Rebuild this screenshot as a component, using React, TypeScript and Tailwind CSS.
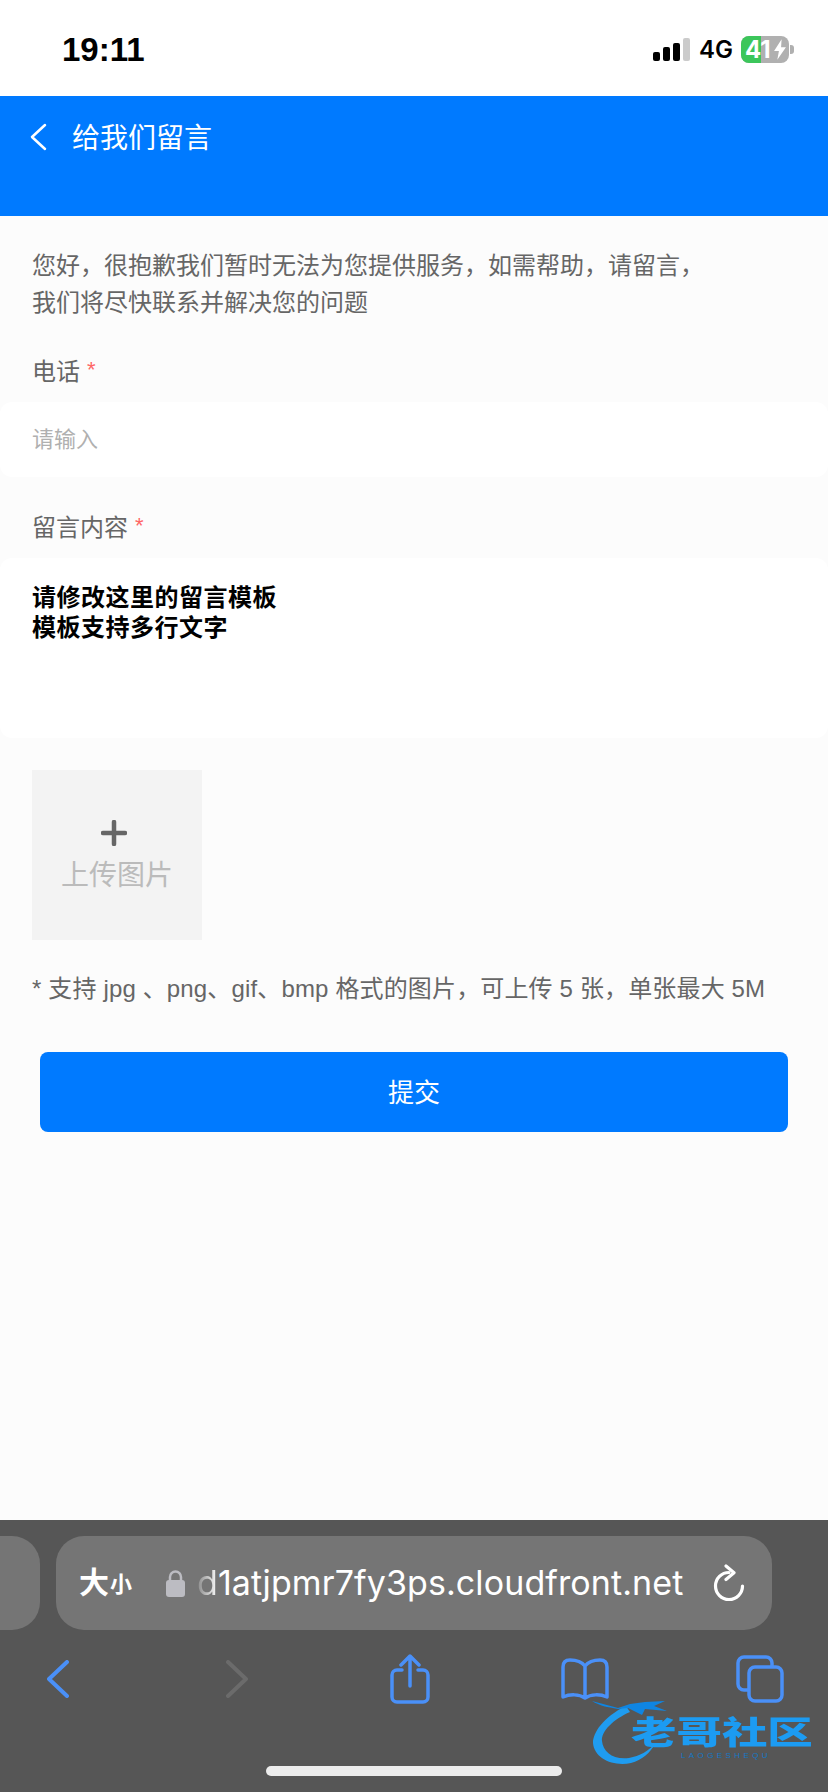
const cjk = "font-['Liberation_Sans','Noto_Sans_CJK_SC',sans-serif]";

function StatusBar() {
  return (
    <div className="flex h-24 shrink-0 items-start justify-between bg-white pl-[62px] pr-[34px] pt-[30px]">
      <span className="font-['Liberation_Sans',sans-serif] text-[33px] font-bold leading-[40px] text-black">19:11</span>
      <div className="mt-[6px] flex items-center">
        <div className="flex h-[23px] items-end gap-[3px]">
          <span className="h-[9px] w-[7px] rounded-[2px] bg-black" />
          <span className="h-[14px] w-[7px] rounded-[2px] bg-black" />
          <span className="h-[18px] w-[7px] rounded-[2px] bg-black" />
          <span className="h-[23px] w-[7px] rounded-[2px] bg-[#cbcbcb]" />
        </div>
        <span className="ml-[9px] font-['Inter',sans-serif] text-[24px] font-semibold leading-[24px] text-black">4G</span>
        <div className="relative ml-[8px] flex h-[27px] w-[48px] overflow-hidden rounded-[8px] bg-[#b0b0b0]">
          <span className="h-full w-[20px] bg-[#3cc65b]" />
          <span className="absolute left-[4px] top-0 font-['Inter',sans-serif] text-[24px] font-bold leading-[27px] text-white">41</span>
          <svg className="absolute left-[32px] top-[3px]" width="14" height="21" viewBox="0 0 13 19">
            <path d="M8 0 1 11h4.500L4 19l8-11.500H7.500z" fill="#fff" />
          </svg>
        </div>
        <span className="ml-[1px] h-[9px] w-[4px] rounded-r-[3px] bg-[#b0b0b0]" />
      </div>
    </div>
  );
}

function Required({ children }: { children: string }) {
  return (
    <div className="flex pl-8 text-[24px] leading-[36px] text-[#666]">
      {children}
      <span className="ml-[7px] font-['Liberation_Sans',sans-serif] text-[22px] leading-[32px] text-[#f66]">*</span>
    </div>
  );
}

function Toolbar() {
  const blue = "#4a90f8";
  return (
    <div className="relative flex h-[272px] shrink-0 flex-col bg-[#565656]">
      <div className="mt-4 flex h-[94px] items-center">
        <div className="h-full w-[40px] rounded-r-[28px] bg-[#757575]" />
        <div className="ml-4 flex h-full w-[716px] items-center rounded-[28px] bg-[#757575] pl-[23px]">
          <span className="text-[30px] font-bold leading-none text-white">大</span>
          <span className="ml-[1px] mt-[4px] text-[22px] font-bold leading-none text-white">小</span>
          <svg className="ml-[34px]" width="19" height="27" viewBox="0 0 19 27">
            <path d="M4 11V7a5.500 5.500 0 0 1 11 0v4" fill="none" stroke="#bcbcc2" strokeWidth="2.500" />
            <rect x="0" y="10" width="19" height="17" rx="3" fill="#bcbcc2" />
          </svg>
          <span className="ml-[12px] font-['Inter',sans-serif] text-[34px] leading-none tracking-[0.1px] text-white">
            <span className="bg-gradient-to-r from-[#8a8a8a] to-white bg-clip-text text-transparent">d</span>1atjpmr7fy3ps.cloudfront.net
          </span>
          <svg className="ml-auto mr-[27px]" width="32" height="38" viewBox="0 0 32 38" fill="none" stroke="#fff" strokeWidth="3.200" strokeLinecap="round" strokeLinejoin="round">
            <path d="M16 8.500A13.500 13.500 0 1 0 29.500 22" />
            <path d="M13 2l8 6.800-8 6.700" />
          </svg>
        </div>
      </div>
      <div className="mt-6 flex h-[50px] items-center pl-[47px]">
        <svg width="22" height="38" viewBox="0 0 22 38" fill="none" stroke={blue} strokeWidth="4" strokeLinecap="round" strokeLinejoin="round">
          <path d="M20 2 2 19l18 17" />
        </svg>
        <svg className="ml-[157px]" width="22" height="38" viewBox="0 0 22 38" fill="none" stroke="#6b6b6b" strokeWidth="4" strokeLinecap="round" strokeLinejoin="round">
          <path d="m2 2 18 17L2 36" />
        </svg>
        <svg className="ml-[142px]" width="40" height="50" viewBox="0 0 40 50" fill="none" stroke={blue} strokeWidth="3.500" strokeLinecap="round" strokeLinejoin="round">
          <path d="M12 16H7a5 5 0 0 0-5 5v22a5 5 0 0 0 5 5h26a5 5 0 0 0 5-5V21a5 5 0 0 0-5-5h-5" />
          <path d="M20 32V3M11 11l9-9 9 9" />
        </svg>
        <svg className="ml-[130px]" width="50" height="42" viewBox="0 0 50 42" fill="none" stroke={blue} strokeWidth="3.500" strokeLinecap="round" strokeLinejoin="round">
          <path d="M25 8C21 3 15 2 10 2 5 2 3 5 3 9v30c7-3 16-3 22 1 6-4 15-4 22-1V9c0-4-2-7-7-7-5 0-11 1-15 6zM25 8v32" />
        </svg>
        <svg className="ml-[126px]" width="48" height="48" viewBox="0 0 48 48" fill="none" stroke={blue} strokeWidth="3.500">
          <path d="M12 35H8a6 6 0 0 1-6-6V8a6 6 0 0 1 6-6h22a6 6 0 0 1 6 6v4" />
          <rect x="13" y="12" width="33" height="34" rx="6" />
        </svg>
      </div>
      <div className="absolute bottom-4 left-[266px] h-[10px] w-[296px] rounded-full bg-[#ececec]" />
      <div className="absolute left-[590px] top-[176px] h-[72px] w-[226px]">
        <svg className="absolute left-0 top-0" width="100" height="72" viewBox="0 0 100 72" fill="none">
          <path d="M36 10C13 21 3 37 3 47c1 15 20 24 38 20 11-3 19-10 24-19-7 7-15 12-26 14C23 64 13 56 12 45c-1-10 12-22 28-29z" fill="#1f9cf0" />
          <path d="M28 12 2 5c8 5 15 6 26 8l10-1 14 7 3-6 22 2-13-5 11-5-20 1L40 8z" fill="#0f85e2" />
        </svg>
        <span className="absolute left-[41px] top-[15px] origin-left scale-x-[1.42] whitespace-nowrap font-['Noto_Sans_CJK_SC',sans-serif] text-[32px] font-black leading-[38px] text-[#1c9bf2] blur-[0.4px]">老哥社区</span>
        <span className="absolute left-[91px] top-[55px] whitespace-nowrap font-['Liberation_Sans',sans-serif] text-[8px] leading-[10px] tracking-[3.400px] text-[#1576c4]">LAOGESHEQU</span>
      </div>
    </div>
  );
}

export default function App() {
  return (
    <div className={`flex h-[1792px] w-[828px] flex-col overflow-hidden bg-[#fcfcfc] ${cjk}`}>
      <StatusBar />
      <header className="flex h-[120px] shrink-0 items-start bg-[#007aff] pl-[28px] pt-[26px]">
        <svg className="mt-[1px]" width="20" height="28" viewBox="0 0 20 28" fill="none" stroke="#fff" strokeWidth="2.500" strokeLinecap="round" strokeLinejoin="round">
          <path d="M17 2 4 14l13 12" />
        </svg>
        <h1 className="ml-[24px] mt-[3px] text-[28px] font-normal leading-[28px] text-white">给我们留言</h1>
      </header>
      <main className="flex-1">
        <p className="mt-[31px] pl-8 text-[24px] leading-[37px] text-[#666]">
          您好，很抱歉我们暂时无法为您提供服务，如需帮助，请留言，
          <br />
          我们将尽快联系并解决您的问题
        </p>
        <div className="mt-[33px]">
          <Required>电话</Required>
        </div>
        <div className="mt-[12px] flex h-[75px] items-center rounded-[12px] bg-white pl-8 text-[22px] text-[#b0b0b0]">请输入</div>
        <div className="mt-[33px]">
          <Required>留言内容</Required>
        </div>
        <div className="mt-[12px] h-[180px] rounded-[12px] bg-white pl-8 pt-[25px] text-[24px] font-semibold leading-[30px] tracking-[0.5px] text-black">
          请修改这里的留言模板
          <br />
          模板支持多行文字
        </div>
        <div className="ml-8 mt-[32px] flex h-[170px] w-[170px] flex-col items-center bg-[#f3f3f3] pt-[50px]">
          <svg className="mr-[6px]" width="26" height="26" viewBox="0 0 26 26" fill="none" stroke="#666" strokeWidth="4.500" strokeLinecap="round">
            <path d="M13 2v22M2 13h22" />
          </svg>
          <span className="mt-[14px] text-[28px] leading-[32px] text-[#bbb]">上传图片</span>
        </div>
        <p className="mt-[31px] whitespace-nowrap pl-8 text-[24px] leading-[36px] tracking-[0.15px] text-[#666]">* 支持 jpg 、png、gif、bmp 格式的图片，可上传 5 张，单张最大 5M</p>
        <button type="button" className="ml-10 mt-[45px] flex h-[80px] w-[748px] items-center justify-center rounded-[8px] bg-[#007aff] pt-[3px] text-[26px] text-white">
          提交
        </button>
      </main>
      <Toolbar />
    </div>
  );
}
